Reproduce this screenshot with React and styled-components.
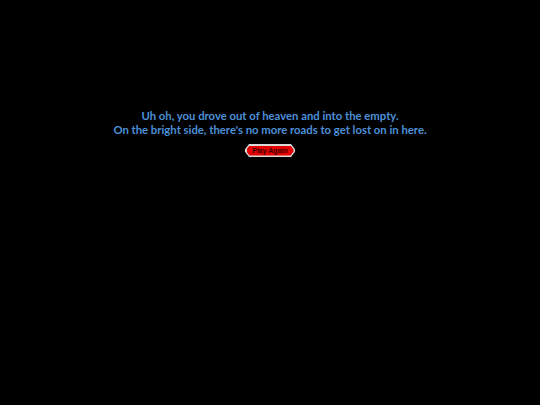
import React from 'react';
import styled, { createGlobalStyle } from 'styled-components';

const GlobalStyle = createGlobalStyle`
  html, body {
    margin: 0;
    padding: 0;
    background: #000000;
    height: 100%;
  }
`;

const Screen = styled.div`
  display: flex;
  flex-direction: column;
  align-items: center;
  width: 540px;
  height: 405px;
  padding-top: 109px;
  box-sizing: border-box;
  background: #000000;
`;

const Message = styled.p`
  margin: 0;
  font-family: Lato, "Open Sans", sans-serif;
  font-weight: 700;
  font-size: 11.3px;
  line-height: 14px;
  color: #4d90d8;
  text-align: center;
`;

const PlayButton = styled.button`
  margin-top: 7px;
  width: 50px;
  height: 13px;
  padding: 0;
  border: none;
  background: #d8d8d8;
  clip-path: polygon(4px 0, 46px 0, 50px 40%, 50px 60%, 46px 100%, 4px 100%, 0 60%, 0 40%);
  display: flex;
  align-items: stretch;
  justify-content: stretch;
  cursor: pointer;
`;

const ButtonFace = styled.span`
  flex: 1;
  margin: 1.5px;
  background: #e40000;
  clip-path: polygon(3px 0, calc(100% - 3px) 0, 100% 40%, 100% 60%, calc(100% - 3px) 100%, 3px 100%, 0 60%, 0 40%);
  font-family: "Liberation Sans", Arial, sans-serif;
  font-weight: 700;
  font-size: 7px;
  line-height: 10px;
  color: #400000;
  text-align: center;
`;

const App = () => {
  return (
    <>
      <GlobalStyle />
      <Screen>
        <Message>
          Uh oh, you drove out of heaven and into the empty.
          <br />
          On the bright side, there's no more roads to get lost on in here.
        </Message>
        <PlayButton>
          <ButtonFace>Play Again</ButtonFace>
        </PlayButton>
      </Screen>
    </>
  );
};

export default App;
